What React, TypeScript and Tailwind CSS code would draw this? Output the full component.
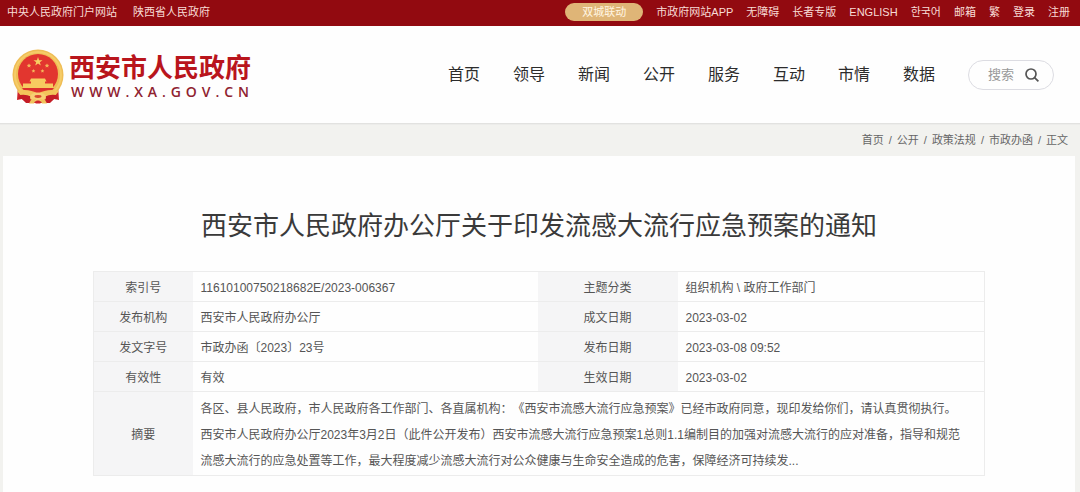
import { Fragment } from "react";

const leftLinks = ["中央人民政府门户网站", "陕西省人民政府"];
const rightLinks = ["市政府网站APP", "无障碍", "长者专版", "ENGLISH", "한국어", "邮箱", "繁", "登录", "注册"];
const navItems = ["首页", "领导", "新闻", "公开", "服务", "互动", "市情", "数据"];
const crumbs = ["首页", "公开", "政策法规", "市政办函", "正文"];

const rows = [
  ["索引号", "11610100750218682E/2023-006367", "主题分类", "组织机构 \\ 政府工作部门"],
  ["发布机构", "西安市人民政府办公厅", "成文日期", "2023-03-02"],
  ["发文字号", "市政办函〔2023〕23号", "发布日期", "2023-03-08 09:52"],
  ["有效性", "有效", "生效日期", "2023-03-02"],
];

const summary = [
  "各区、县人民政府，市人民政府各工作部门、各直属机构：《西安市流感大流行应急预案》已经市政府同意，现印发给你们，请认真贯彻执行。",
  "西安市人民政府办公厅2023年3月2日（此件公开发布）西安市流感大流行应急预案1总则1.1编制目的加强对流感大流行的应对准备，指导和规范",
  "流感大流行的应急处置等工作，最大程度减少流感大流行对公众健康与生命安全造成的危害，保障经济可持续发...",
];

function Emblem() {
  return (
    <svg viewBox="0 0 52 56" className="h-14 w-[52px] shrink-0" aria-hidden="true">
      <path d="M6 37 L5 51 L10 50 L15 54 L37 54 L42 50 L47 51 L46 37Z" fill="#cf242b" />
      <circle cx="26" cy="26" r="25.5" fill="#efbd55" />
      <circle cx="26" cy="26" r="23" fill="none" stroke="#f5cc68" strokeWidth="2" />
      <circle cx="26" cy="25" r="20" fill="#e2362f" />
      <path
        d="M26 8 L27.1 11.2 L30.5 11.2 L27.8 13.2 L28.8 16.4 L26 14.4 L23.2 16.4 L24.2 13.2 L21.5 11.2 L24.9 11.2Z"
        fill="#f8cf63"
      />
      <g fill="#f5b65a">
        <path d="M17 14.5 l.7 1.3 1.5.2-1.1 1 .3 1.5-1.4-.7-1.4.7.3-1.5-1.1-1 1.5-.2Z" />
        <path d="M35 14.5 l.7 1.3 1.5.2-1.1 1 .3 1.5-1.4-.7-1.4.7.3-1.5-1.1-1 1.5-.2Z" />
        <path d="M21.5 20 l.6 1.2 1.3.2-1 .9.2 1.3-1.1-.6-1.2.6.2-1.3-1-.9 1.4-.2Z" />
        <path d="M30.5 20 l.6 1.2 1.3.2-1 .9.2 1.3-1.1-.6-1.2.6.2-1.3-1-.9 1.4-.2Z" />
      </g>
      <path d="M19 29.5 h14 l1.5 3 h-1.5 v2 h8 v4.5 h-30 v-4.5 h8 v-2 h-1.5Z" fill="#f7cc60" />
      <path d="M10 39 h32 l-3 3.5 q-6-2.5-13 .5 q-7-3-13-.5Z" fill="#dc322d" />
      <path d="M5 42 Q16 39 26 44.5 Q36 39 47 42 L42 48 Q33 44 26 48 Q19 44 10 48Z" fill="#f3c45b" />
      <path d="M8 46 Q14 45 19 47.5 L17 54 L14 54 L10 50 L6 50Z M44 46 Q38 45 33 47.5 L35 54 L38 54 L42 50 L46 50Z" fill="#c41c26" />
      <ellipse cx="26" cy="48" rx="8" ry="4.5" fill="#f7d073" />
      <ellipse cx="26" cy="47.5" rx="3.5" ry="1.4" fill="#d9482f" />
      <path d="M19 51 L24 50 L22 54.5 L17 54.5Z M33 51 L28 50 L30 54.5 L35 54.5Z" fill="#f1c35c" />
      <path d="M24.5 51.5 h3 l1 3 h-5Z" fill="#cf242b" />
    </svg>
  );
}

export default function App() {
  return (
    <div className="flex min-h-screen flex-col bg-[#f2f2ef] font-['Liberation_Sans','Noto_Sans_CJK_SC','Noto_Sans_CJK_KR',sans-serif] text-[#555]">
      <div className="flex h-[26px] items-center justify-between bg-[#920a10] pr-2.5 pb-0.5 pl-[7px] text-[11px] leading-4 text-[#f8dcd6]">
        <div className="flex gap-4">
          {leftLinks.map((t) => (
            <a key={t} href="#">{t}</a>
          ))}
        </div>
        <div className="flex items-center gap-[13px]">
          <a href="#" className="rounded-full bg-[#dfb577] px-[17px] py-px text-[#fff6e2]">双城联动</a>
          {rightLinks.map((t) => (
            <a key={t} href="#">{t}</a>
          ))}
        </div>
      </div>

      <header className="flex h-[98px] items-center justify-between border-b border-[#e2e2e0] bg-[#fefefe] pr-[26px] pl-3">
        <a href="#" className="flex items-center gap-[5px] pt-1">
          <Emblem />
          <span className="flex flex-col">
            <span className="text-[26px] leading-[30px] font-bold text-[#b9151c]">西安市人民政府</span>
            <span className="flex justify-between px-0.5 font-['Open_Sans',sans-serif] text-sm leading-[18px] font-semibold text-[#8f2230]">
              {Array.from("WWW.XA.GOV.CN").map((c, i) => (
                <span key={i}>{c}</span>
              ))}
            </span>
          </span>
        </a>
        <div className="flex items-center gap-[33px]">
          <nav className="flex gap-[33px] text-base text-[#2c2c2c]">
            {navItems.map((t) => (
              <a key={t} href="#">{t}</a>
            ))}
          </nav>
          <form className="flex h-[30px] w-[86px] items-center rounded-full border border-[#dcdce2] pr-3.5 pl-[19px]">
            <input
              type="text"
              aria-label="搜索"
              placeholder="搜索"
              className="w-full min-w-0 text-[13px] outline-none placeholder:text-[#999]"
            />
            <button type="button" aria-label="提交搜索" className="shrink-0">
              <svg viewBox="0 0 14 14" className="size-3.5" fill="none" stroke="#555" strokeWidth="1.7">
                <circle cx="6" cy="6" r="5" />
                <path d="M9.6 9.6 L13.4 13.4" />
              </svg>
            </button>
          </form>
        </div>
      </header>

      <nav aria-label="面包屑" className="flex h-8 items-center justify-end gap-[5px] border-t border-[#ececea] pr-3 text-[11px] text-[#666]">
        {crumbs.map((t, i) => (
          <Fragment key={t}>
            {i > 0 && <span>/</span>}
            <a href="#">{t}</a>
          </Fragment>
        ))}
      </nav>

      <main className="mr-[5px] ml-[3px] flex-1 bg-[#fefefe] px-[90px] pt-[51px] pb-4">
        <h1 className="text-center text-[26px] leading-[38px] text-[#3a3a3a]">
          西安市人民政府办公厅关于印发流感大流行应急预案的通知
        </h1>
        <table className="mt-[26px] w-full table-fixed border-collapse border border-[#ececec] text-xs">
          <colgroup>
            <col className="w-[99px]" />
            <col />
            <col className="w-[140px]" />
            <col className="w-[307px]" />
          </colgroup>
          <tbody>
            {rows.map((r) => (
              <tr key={r[0]} className="h-[30px] border-b border-[#ececec]">
                <th scope="row" className="bg-[#f5f5f6] pt-0.5 font-normal">{r[0]}</th>
                <td className="px-2 pt-0.5">{r[1]}</td>
                <th scope="row" className="bg-[#f5f5f6] pt-0.5 font-normal">{r[2]}</th>
                <td className="px-2 pt-0.5">{r[3]}</td>
              </tr>
            ))}
            <tr>
              <th scope="row" className="bg-[#f5f5f6] pt-0.5 font-normal">摘要</th>
              <td colSpan={3} className="px-2 pt-1 pb-px leading-[26px] [text-spacing-trim:space-all]">
                {summary.map((line) => (
                  <p key={line}>{line}</p>
                ))}
              </td>
            </tr>
          </tbody>
        </table>
      </main>
    </div>
  );
}
